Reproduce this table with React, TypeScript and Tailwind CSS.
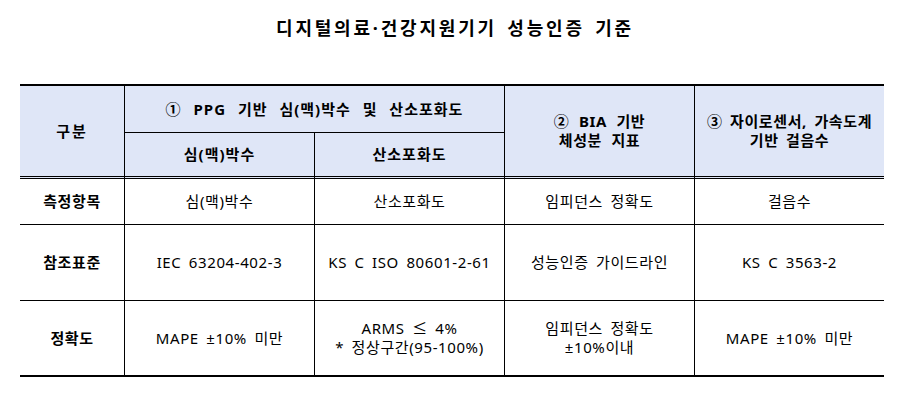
const font = { fontFamily: '"Noto Sans", "Noto Sans CJK KR", sans-serif' };

type CellProps = {
  children: React.ReactNode;
  className?: string;
};

function Cell({ children, className = "" }: CellProps) {
  return (
    <div className={`flex items-center justify-center text-center leading-[19px] border-black ${className}`}>
      <div>{children}</div>
    </div>
  );
}

const rows = [
  { label: "측정항목", cells: [["심(맥)박수"], ["산소포화도"], ["임피던스 정확도"], ["걸음수"]] },
  { label: "참조표준", cells: [["IEC 63204-402-3"], ["KS C ISO 80601-2-61"], ["성능인증 가이드라인"], ["KS C 3563-2"]] },
  {
    label: "정확도",
    cells: [["MAPE ±10% 미만"], ["ARMS ≤ 4%", "* 정상구간(95-100%)"], ["임피던스 정확도", "±10%이내"], ["MAPE ±10% 미만"]],
  },
];

export default function App() {
  const head = "bg-[#dfe6f7] font-bold";
  return (
    <div className="w-[910px] h-[408px] bg-white text-black" style={font}>
      <div className="h-[84px] pt-[15px] text-center text-[18px] leading-[26px] font-bold tracking-[2.8px] [word-spacing:3px]">
        디지털의료·건강지원기기 성능인증 기준
      </div>

      <div className="ml-[20px] w-[864px] border-t-2 border-b-2 border-black grid grid-cols-[105px_190px_190px_190px_189px] grid-rows-[47px_46px_46px_76px_74px] text-[15px] tracking-[0.6px] [word-spacing:3px]">
        <Cell className={`${head} row-span-2 border-r border-b-[3px] border-double tracking-[2px]`}>구분</Cell>
        <Cell className={`${head} col-span-2 border-r border-b tracking-[1px] [word-spacing:7px]`}>
          ① PPG 기반 심(맥)박수 및 산소포화도
        </Cell>
        <Cell className={`${head} row-span-2 border-r border-b-[3px] border-double [word-spacing:5px]`}>
          ② BIA 기반
          <br />
          체성분 지표
        </Cell>
        <Cell className={`${head} row-span-2 border-b-[3px] border-double`}>
          ③ 자이로센서, 가속도계
          <br />
          기반 걸음수
        </Cell>
        <Cell className={`${head} border-r border-b-[3px] border-double tracking-[1px]`}>심(맥)박수</Cell>
        <Cell className={`${head} border-r border-b-[3px] border-double tracking-[1px]`}>산소포화도</Cell>

        {rows.map((row, ri) => {
          const last = ri === rows.length - 1;
          return [
            <Cell key={`${ri}-l`} className={`font-bold border-r ${last ? "" : "border-b"}`}>
              {row.label}
            </Cell>,
            ...row.cells.map((lines, ci) => (
              <Cell
                key={`${ri}-${ci}`}
                className={`${ci < 3 ? "border-r" : ""} ${last ? "" : "border-b"}`}
              >
                {lines.map((l, li) => (
                  <div key={li}>{l}</div>
                ))}
              </Cell>
            )),
          ];
        })}
      </div>
    </div>
  );
}
